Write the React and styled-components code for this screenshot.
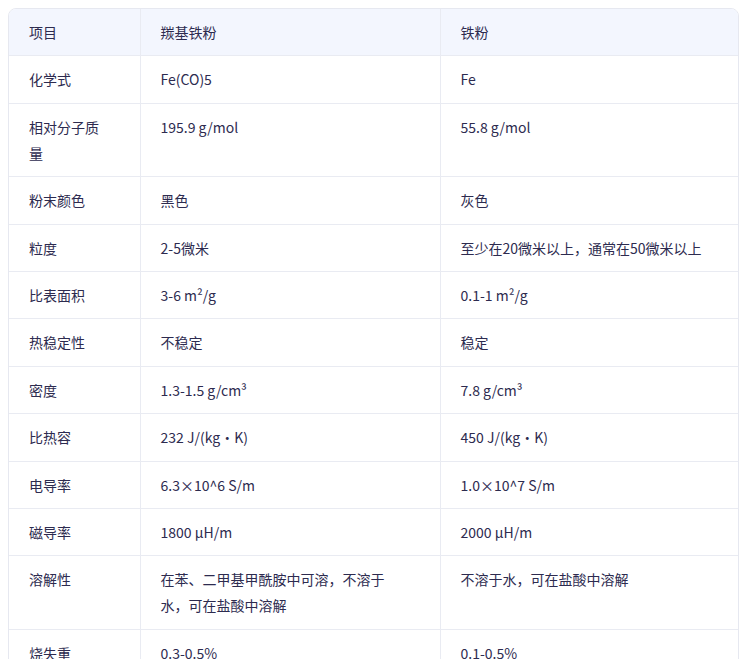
import React from "react";
import styled, { createGlobalStyle } from "styled-components";

const Global = createGlobalStyle`
  body { margin: 0; background: #fff; font-family: "Noto Sans CJK SC", "Noto Sans", sans-serif; }
`;

const Wrap = styled.div`
  margin: 8px;
  width: 729px;
  border: 1px solid #e6e8f0;
  border-radius: 8px;
  overflow: hidden;
`;

const Table = styled.table`
  width: 100%;
  border-collapse: collapse;
  table-layout: fixed;
  color: #2d2b4f;
  font-size: 14px;
`;

const Th = styled.th`
  background: #f3f6fe;
  font-weight: 400;
  text-align: left;
  padding: 10px 30px 10.4px 20px;
  line-height: 26px;
  border-left: 1px solid #e9ebf2;
  &:first-child { border-left: none; }
`;

const Td = styled.td`
  padding: 10px 30px 10.4px 20px;
  line-height: 26px;
  vertical-align: top;
  border-top: 1px solid #e9ebf2;
  border-left: 1px solid #e9ebf2;
  &:first-child { border-left: none; }
  &:last-child { padding-right: 10px; }
`;

const rows = [
  ["化学式", "Fe(CO)5", "Fe"],
  ["相对分子质量", "195.9 g/mol", "55.8 g/mol"],
  ["粉末颜色", "黑色", "灰色"],
  ["粒度", "2-5微米", "至少在20微米以上，通常在50微米以上"],
  ["比表面积", "3-6 m²/g", "0.1-1 m²/g"],
  ["热稳定性", "不稳定", "稳定"],
  ["密度", "1.3-1.5 g/cm³", "7.8 g/cm³"],
  ["比热容", "232 J/(kg·K)", "450 J/(kg·K)"],
  ["电导率", "6.3×10^6 S/m", "1.0×10^7 S/m"],
  ["磁导率", "1800 μH/m", "2000 μH/m"],
  ["溶解性", "在苯、二甲基甲酰胺中可溶，不溶于水，可在盐酸中溶解", "不溶于水，可在盐酸中溶解"],
  ["烧失重", "0.3-0.5%", "0.1-0.5%"],
];

export default function App() {
  return (
    <>
      <Global />
      <Wrap>
        <Table>
          <colgroup>
            <col style={{ width: 131 }} />
            <col style={{ width: 300 }} />
            <col />
          </colgroup>
          <thead>
            <tr><Th>项目</Th><Th>羰基铁粉</Th><Th>铁粉</Th></tr>
          </thead>
          <tbody>
            {rows.map((r) => (
              <tr key={r[0]}>{r.map((c, i) => <Td key={i}>{c}</Td>)}</tr>
            ))}
          </tbody>
        </Table>
      </Wrap>
    </>
  );
}
